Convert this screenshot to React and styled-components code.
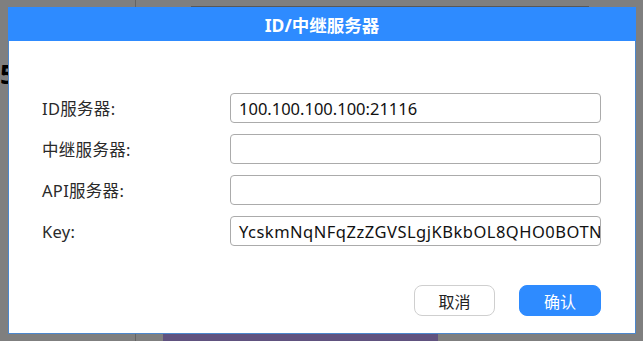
import React from "react";
import styled, { createGlobalStyle } from "styled-components";

const Global = createGlobalStyle`
  html, body { margin: 0; padding: 0; }
  body {
    width: 643px; height: 341px; overflow: hidden;
    font-family: "Noto Sans", "Noto Sans CJK SC", sans-serif;
  }
  * { box-sizing: border-box; }
`;

const Page = styled.div`
  position: relative;
  width: 643px;
  height: 341px;
  display: flex;
  background: #ffffff;
  overflow: hidden;
`;

const Sidebar = styled.div`
  width: 136px;
  border-right: 1px solid #c8c8c8;
  padding-top: 56px;
  font-weight: 700;
  font-size: 26px;
  color: #000;
`;

const Main = styled.div`
  flex: 1;
  display: flex;
  flex-direction: column;
  justify-content: space-between;
  padding-left: 27px;
`;

const TopCard = styled.div`
  margin-left: 28px;
  width: 398px;
  height: 8px;
  border-bottom: 2px solid #b0b0b0;
`;

const BottomBar = styled.div`
  width: 275px;
  height: 8px;
  background: #c0a4ff;
`;

const Overlay = styled.div`
  position: absolute;
  inset: 0;
  background: rgba(0, 0, 0, 0.5);
  padding: 7px 7px 7px 8px;
  display: flex;
`;

const Dialog = styled.div`
  flex: 1;
  display: flex;
  flex-direction: column;
  background: #fff;
  border: 1px solid #4c87cc;
  border-top: none;
`;

const Header = styled.div`
  height: 34px;
  background: #2e8bff;
  color: #fff;
  font-weight: 700;
  font-size: 17.5px;
  display: flex;
  align-items: center;
  justify-content: center;
  margin: 0 -1px;
`;

const Form = styled.div`
  margin-top: 52px;
  padding: 0 34px 0 33px;
  display: grid;
  grid-template-columns: 188px 1fr;
  row-gap: 11px;
  align-items: center;
`;

const Label = styled.div`
  font-size: 16.5px;
  color: #2a2a2a;
  letter-spacing: 0.3px;
`;

const Input = styled.div`
  height: 30px;
  border: 1px solid #ababab;
  border-radius: 4px;
  padding-left: 8px;
  font-size: 16.5px;
  letter-spacing: ${(p) => p.$spacing || "0"};
  color: #111;
  display: flex;
  align-items: center;
  white-space: nowrap;
  overflow: hidden;
`;

const Footer = styled.div`
  margin-top: 39px;
  padding-right: 34px;
  display: flex;
  justify-content: flex-end;
  gap: 24px;
`;

const Button = styled.div`
  width: ${(p) => (p.$primary ? "82px" : "81px")};
  height: 31px;
  border-radius: 8px;
  display: flex;
  align-items: center;
  justify-content: center;
  font-size: 16px;
  background: ${(p) => (p.$primary ? "#2e8bff" : "#fff")};
  color: ${(p) => (p.$primary ? "#fff" : "#222")};
  border: 1px solid ${(p) => (p.$primary ? "#2e8bff" : "#cfcfcf")};
`;

const fields = [
  ["ID服务器:", "100.100.100.100:21116", "0"],
  ["中继服务器:", "", "0"],
  ["API服务器:", "", "0"],
  ["Key:", "YcskmNqNFqZzZGVSLgjKBkbOL8QHO0BOTN", "0.5px"],
];

export default function App() {
  return (
    <>
      <Global />
      <Page>
        <Sidebar>5</Sidebar>
        <Main>
          <TopCard />
          <BottomBar />
        </Main>
        <Overlay>
          <Dialog>
            <Header>ID/中继服务器</Header>
            <Form>
              {fields.map(([l, v, s]) => (
                <React.Fragment key={l}>
                  <Label>{l}</Label>
                  <Input $spacing={s}>{v}</Input>
                </React.Fragment>
              ))}
            </Form>
            <Footer>
              <Button>取消</Button>
              <Button $primary>确认</Button>
            </Footer>
          </Dialog>
        </Overlay>
      </Page>
    </>
  );
}
